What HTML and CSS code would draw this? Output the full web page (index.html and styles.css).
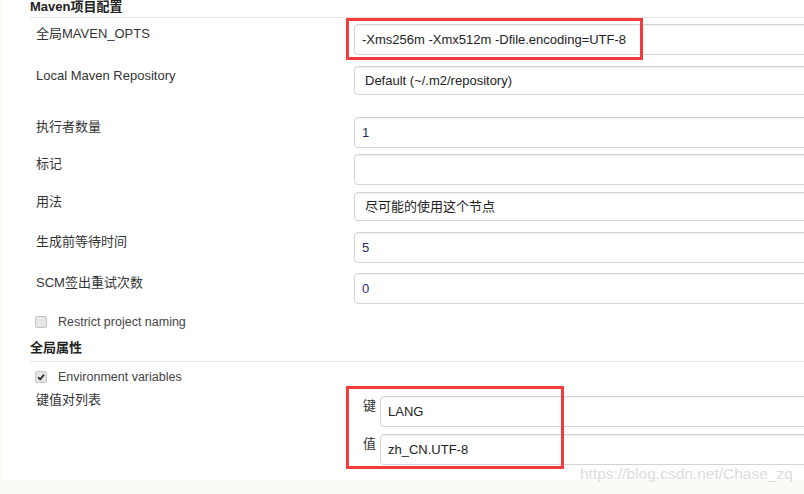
FILE: index.html
```html
<!DOCTYPE html>
<html lang="zh-CN">

<head>
  <meta charset="UTF-8">
  <meta name="viewport" content="width=device-width, initial-scale=1.0">
  <link rel="stylesheet" href="styles.css">
  <title>Maven项目配置</title>
</head>

<body>

  <div class="page">
    <h2 class="section section-first">Maven项目配置</h2>

    <div class="row r-opts">
      <div class="label">全局MAVEN_OPTS</div>
      <div class="field">
        <div class="input">-Xms256m -Xmx512m -Dfile.encoding=UTF-8</div>
        <span class="mark mark-opts"></span>
      </div>
    </div>

    <div class="row r-repo">
      <div class="label">Local Maven Repository</div>
      <div class="field">
        <div class="select">Default (~/.m2/repository)</div>
      </div>
    </div>

    <div class="row r-exec">
      <div class="label">执行者数量</div>
      <div class="field">
        <div class="input num">1</div>
      </div>
    </div>

    <div class="row r-tag">
      <div class="label">标记</div>
      <div class="field">
        <div class="input"></div>
      </div>
    </div>

    <div class="row r-usage">
      <div class="label">用法</div>
      <div class="field">
        <div class="select">尽可能的使用这个节点</div>
      </div>
    </div>

    <div class="row r-wait">
      <div class="label">生成前等待时间</div>
      <div class="field">
        <div class="input num">5</div>
      </div>
    </div>

    <div class="row r-scm">
      <div class="label">SCM签出重试次数</div>
      <div class="field">
        <div class="input num">0</div>
      </div>
    </div>

    <div class="check r-restrict">
      <span class="box"></span>
      <span>Restrict project naming</span>
    </div>

    <h2 class="section section-props">全局属性</h2>

    <div class="check r-env">
      <span class="box checked">
        <svg viewBox="0 0 10 10" width="10" height="10">
          <path d="M2 5.2 L4.2 7.4 L8 2.6" fill="none" stroke="#333" stroke-width="1.8" />
        </svg>
      </span>
      <span>Environment variables</span>
    </div>

    <div class="row r-kv">
      <div class="label kv-label">键值对列表</div>
      <div class="field kv-field">
        <div class="pair">
          <span class="pair-name">键</span>
          <div class="input">LANG</div>
        </div>
        <div class="pair">
          <span class="pair-name">值</span>
          <div class="input">zh_CN.UTF-8</div>
        </div>
        <span class="mark mark-kv"></span>
      </div>
    </div>

    <div class="watermark">https://blog.csdn.net/Chase_zq</div>
  </div>

</body>

</html>
```

FILE: styles.css
```css
html,
body {
  margin: 0;
  height: 100%;
  overflow: hidden;
}

body {
  background-color: #fcfaf4;
  font-family: "Liberation Sans", Arial, "Noto Sans CJK SC", sans-serif;
  font-size: 13px;
  color: #333;
}

.page {
  position: relative;
  margin-left: 2px;
  height: 482px;
  width: 830px;
  padding-left: 28px;
  background-color: #fff;
  box-sizing: border-box;
}

.section {
  margin: 0;
  font-size: 13px;
  font-weight: bold;
  line-height: 18px;
  color: #222;
  border-bottom: 1px solid #e5e5e5;
}

.section-first {
  padding-bottom: 1px;
  margin-top: -2px;
}

.section-props {
  margin-top: 8px;
  padding-bottom: 4px;
}

.row {
  display: flex;
}

.label {
  width: 324px;
  padding-left: 6px;
  padding-top: 1px;
  line-height: 18px;
  box-sizing: border-box;
  flex-shrink: 0;
}

.field {
  position: relative;
  flex: 1;
}

.input,
.select {
  height: 31px;
  line-height: 29px;
  border: 1px solid #d4d4d4;
  border-radius: 4px;
  box-shadow: inset 0 1px 1px rgba(0, 0, 0, 0.05);
  padding: 0 7px;
  box-sizing: border-box;
  background-color: #fff;
  color: #222;
}

.select {
  height: 29px;
  line-height: 27px;
  padding: 0 10px;
}

.num {
  color: #1f2a6b;
}

.r-opts { margin-top: 6px; }
.r-repo { margin-top: 11px; }
.r-exec { margin-top: 22px; }
.r-tag { margin-top: 6px; }
.r-usage { margin-top: 7px; }
.r-wait { margin-top: 11px; }
.r-scm { margin-top: 10px; }

.check {
  display: flex;
  align-items: center;
  height: 18px;
  padding-left: 5px;
  font-size: 12.5px;
  color: #444;
}

.r-restrict { margin-top: 9px; }
.r-env { margin-top: 6px; }

.box {
  display: inline-flex;
  align-items: center;
  justify-content: center;
  width: 10px;
  height: 10px;
  margin-right: 11px;
  border: 1px solid #c6c6c6;
  border-radius: 2px;
  background-color: #e6e6e6;
}

.r-kv .kv-label {
  padding-top: 5px;
}

.kv-field {
  padding-top: 10px;
}

.pair {
  display: flex;
  align-items: flex-start;
  margin-bottom: 7px;
}

.pair-name {
  width: 26px;
  padding-top: 1px;
  padding-right: 4px;
  text-align: right;
  box-sizing: border-box;
  line-height: 18px;
  color: #333;
}

.pair .input {
  flex: 1;
}

/* red annotation frames drawn over the form */
.mark {
  position: absolute;
  border: 3px solid #f23c3c;
  box-sizing: border-box;
  pointer-events: none;
}

.mark-opts {
  left: -8px;
  top: -6px;
  width: 297px;
  height: 42px;
}

.mark-kv {
  left: -8px;
  top: 0;
  width: 218px;
  height: 83px;
}

.watermark {
  position: absolute;
  left: 578px;
  top: 466px;
  font-size: 15.5px;
  line-height: 20px;
  color: #dcdcdc;
}
```
